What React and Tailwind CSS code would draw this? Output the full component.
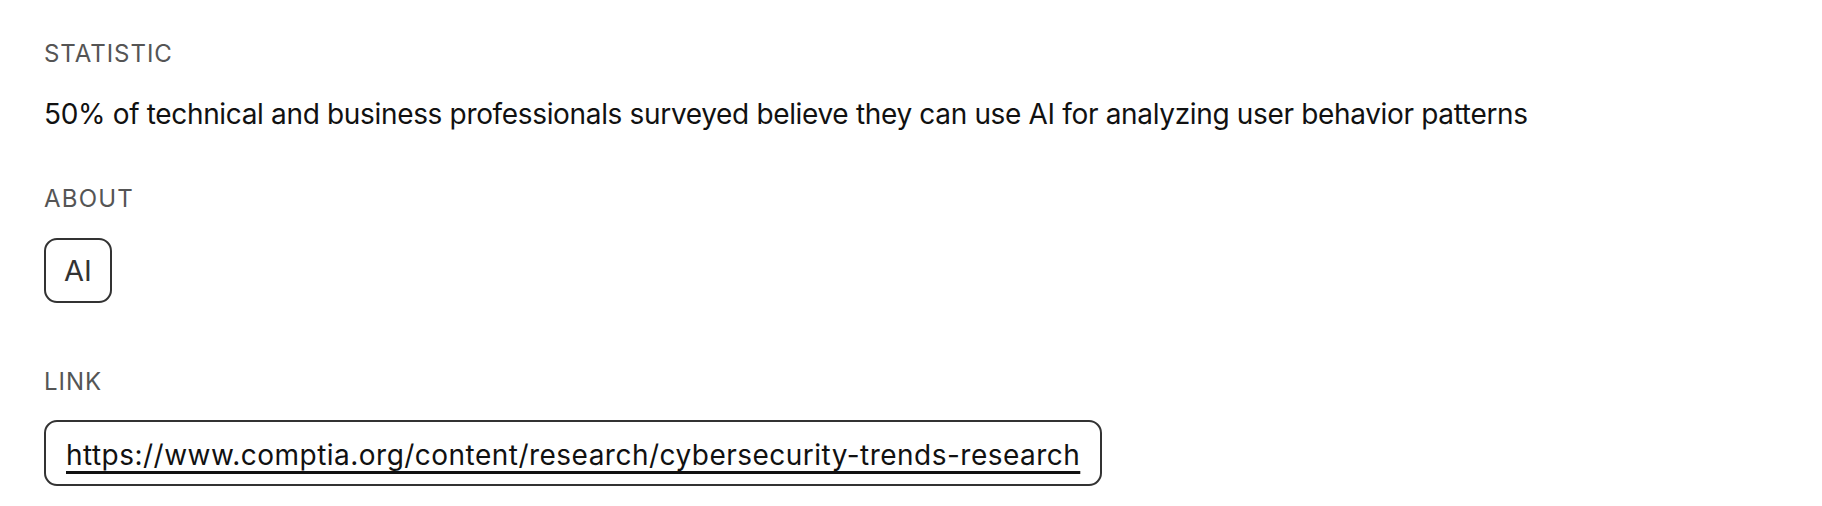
export default function App() {
  return (
    <div className="min-h-screen bg-white px-[44px] pt-[42px] font-['Inter',sans-serif] text-[#111]">
      <div className="flex flex-col items-start">
        <h3 className="text-[24px] leading-none tracking-[0.04em] text-[#555]">STATISTIC</h3>
        <p className="mt-[34px] text-[28px] leading-none tracking-[-0.012em] text-[#111]">
          50% of technical and business professionals surveyed believe they can use AI for analyzing user behavior patterns
        </p>

        <h3 className="mt-[59px] text-[24px] leading-none tracking-[0.05em] text-[#555]">ABOUT</h3>
        <div className="mt-[27px] flex h-[65px] items-center rounded-[13px] border-2 border-[#333] px-[18px] text-[29px] leading-none text-[#333]">
          AI
        </div>

        <h3 className="mt-[67px] text-[24px] leading-none tracking-[0.04em] text-[#555]">LINK</h3>
        <div className="mt-[26px] flex h-[66px] items-center rounded-[13px] border-2 border-[#333] px-[20px] pt-[4px]">
          <a
            href="#"
            className="text-[28px] leading-none tracking-[0.017em] text-[#111] underline decoration-[3px] underline-offset-[6px]"
          >
            https://www.comptia.org/content/research/cybersecurity-trends-research
          </a>
        </div>
      </div>
    </div>
  )
}
